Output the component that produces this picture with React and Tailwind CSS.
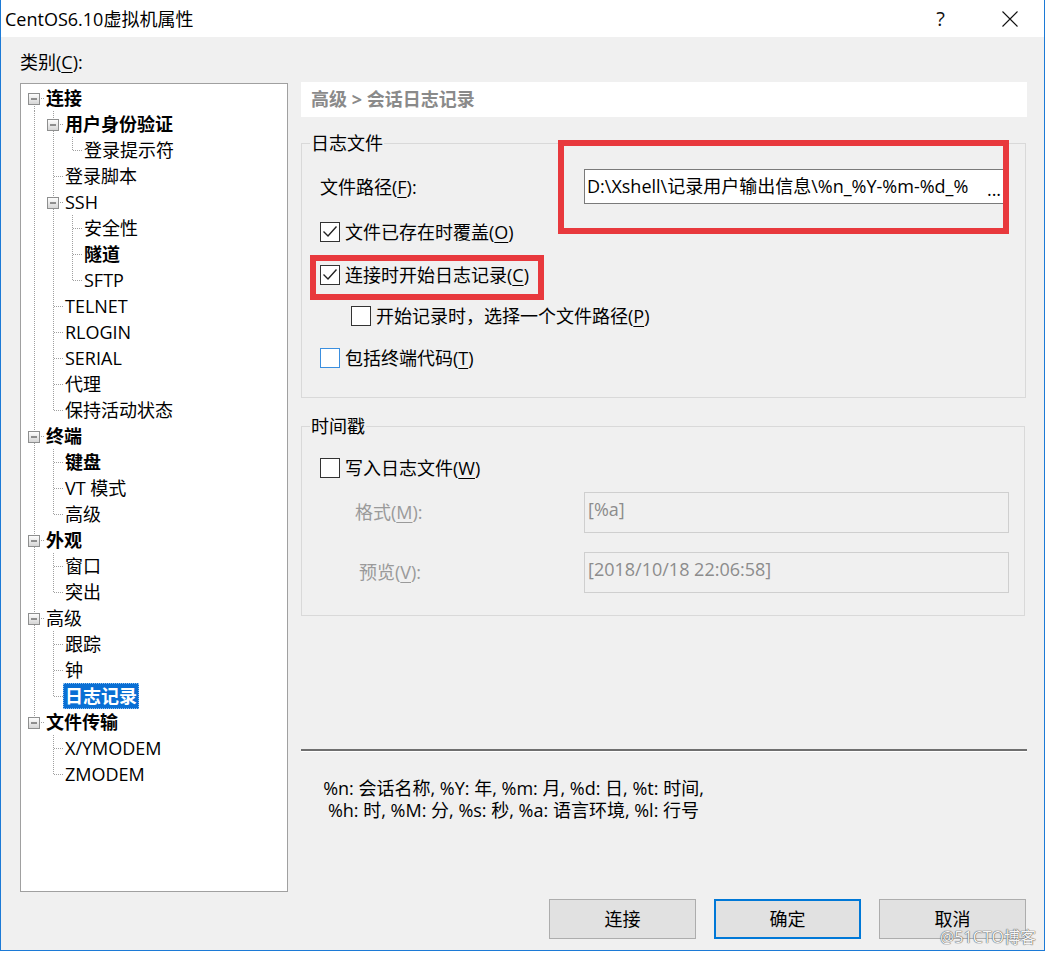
import React from "react";

const FONT = "font-['Open_Sans','Noto_Sans_CJK_SC',sans-serif]";

const tree = [
  {
    label: "连接",
    bold: true,
    children: [
      { label: "用户身份验证", bold: true, children: [{ label: "登录提示符" }] },
      { label: "登录脚本" },
      {
        label: "SSH",
        children: [{ label: "安全性" }, { label: "隧道", bold: true }, { label: "SFTP" }],
      },
      { label: "TELNET" },
      { label: "RLOGIN" },
      { label: "SERIAL" },
      { label: "代理" },
      { label: "保持活动状态" },
    ],
  },
  {
    label: "终端",
    bold: true,
    children: [{ label: "键盘", bold: true }, { label: "VT 模式" }, { label: "高级" }],
  },
  { label: "外观", bold: true, children: [{ label: "窗口" }, { label: "突出" }] },
  {
    label: "高级",
    children: [{ label: "跟踪" }, { label: "钟" }, { label: "日志记录", bold: true, selected: true }],
  },
  { label: "文件传输", bold: true, children: [{ label: "X/YMODEM" }, { label: "ZMODEM" }] },
];

// flatten nested tree into rows with guide-line info
const flatten = (nodes, level = 0, guides = [], out = []) => {
  nodes.forEach((n, i) => {
    const last = i === nodes.length - 1;
    out.push({ ...n, level, guides, last, first: level === 0 && i === 0 });
    if (n.children) flatten(n.children, level + 1, [...guides, !last], out);
  });
  return out;
};

const rows = flatten(tree);

const DOT = { stroke: "#a0a0a0", strokeDasharray: "1 1", strokeWidth: 1 };

const Guide = ({ on }) => (
  <svg width="19" height="26" className="shrink-0">
    {on && <line x1="9.5" y1="0" x2="9.5" y2="26" {...DOT} />}
  </svg>
);

const Connector = ({ first, last, box }) => (
  <svg width="19" height="26" className="shrink-0">
    <defs>
      <linearGradient id="boxfill" x1="0" y1="0" x2="0" y2="1">
        <stop offset="0" stopColor="#ffffff" />
        <stop offset="1" stopColor="#d4d4d4" />
      </linearGradient>
    </defs>
    <line x1="9.5" y1={first ? 13 : 0} x2="9.5" y2={last ? 14 : 26} {...DOT} />
    <line x1="10" y1="13.5" x2="19" y2="13.5" {...DOT} />
    {box && (
      <g>
        <rect x="3.5" y="8.5" width="11" height="11" fill="url(#boxfill)" stroke="#8e8f8f" />
        <line x1="6" y1="14" x2="12" y2="14" stroke="#333" strokeWidth="1" />
      </g>
    )}
  </svg>
);

const Checkbox = ({ checked, hover }) => (
  <span
    className={`flex h-[20px] w-[20px] shrink-0 items-center justify-center border bg-white ${
      hover ? "border-[#3b8fdf]" : "border-[#333333]"
    }`}>
    {checked && (
      <svg width="18" height="18" viewBox="0 0 18 18">
        <path d="M2.5 8.5 L7 13 L15.5 3.5" fill="none" stroke="#222" strokeWidth="1.4" />
      </svg>
    )}
  </span>
);

const Key = ({ children }) => <u className="underline-offset-[3px]">{children}</u>;

export default function App() {
  return (
    <div className={`relative h-[953px] w-[1047px] bg-white text-[18px] text-black ${FONT}`}>
      <div className="flex h-[951px] w-[1045px] flex-col border-x border-b border-[#1c7ad6] bg-[#f0f0f0]">
        {/* Title bar */}
        <div className="flex h-[37px] shrink-0 items-center bg-white pl-[4px]">
          <span className="leading-[24px]">CentOS6.10虚拟机属性</span>
          <div className="ml-auto flex h-full">
            <div className="flex w-[69px] items-center justify-center text-[20px] leading-none text-[#111]">
              ?
            </div>
            <div className="flex w-[69px] items-center justify-center">
              <svg width="16" height="16" viewBox="0 0 16 16">
                <path d="M0.5 0.5 L15.5 15.5 M15.5 0.5 L0.5 15.5" stroke="#111" strokeWidth="1.1" />
              </svg>
            </div>
          </div>
        </div>

        {/* Body */}
        <div className="flex h-[855px] shrink-0 pl-[19px]">
          {/* Category tree */}
          <div className="flex w-[268px] flex-col pt-[13px]">
            <div className="leading-[24px]">
              类别(<Key>C</Key>):
            </div>
            <div className="mt-[9px] h-[810px] border border-[#a0a0a0] bg-white pl-[4px] pt-[1px]">
              {rows.map((r, i) => (
                <div key={i} className="flex h-[26px] items-center">
                  {r.guides.map((g, j) => (
                    <Guide key={j} on={g} />
                  ))}
                  <Connector first={r.first} last={r.last} box={!!r.children} />
                  <span
                    className={`whitespace-nowrap px-[2px] leading-[26px] ${r.bold ? "font-bold" : ""} ${
                      r.selected ? "bg-[#0a6fd4] text-white outline-1 -outline-offset-1 outline-dotted outline-[#8fc0ef]" : ""
                    }`}>
                    {r.label}
                  </span>
                </div>
              ))}
            </div>
          </div>

          {/* Settings panel */}
          <div className="relative ml-[13px] mt-[45px] flex w-[726px] flex-col">
            <div className="flex h-[35px] shrink-0 items-center bg-white pl-[10px] font-bold text-[#8a8a8a]">
              高级 &gt; 会话日志记录
            </div>

            {/* 日志文件 */}
            <fieldset className="mr-[1px] mt-[14px] border border-[#d9d9d9] pb-[26px]">
              <legend className="ml-[8px] px-[1px] leading-[24px]">日志文件</legend>
              <div className="mt-[14px] flex h-[35px] items-center">
                <div className="w-[282px] pl-[18px] leading-[24px]">
                  文件路径(<Key>F</Key>):
                </div>
                <div className="flex h-[35px] w-[421px] border border-[#7a7a7a] bg-white">
                  <span className="flex-1 overflow-hidden whitespace-nowrap pl-[2px] leading-[33px]">
                    D:\Xshell\记录用户输出信息\%n_%Y-%m-%d_%
                  </span>
                  <span className="w-[20px] text-center leading-[38px]">...</span>
                </div>
              </div>
              <div className="mt-[15px] flex h-[26px] items-center gap-[5px] pl-[18px]">
                <Checkbox checked />
                <span>
                  文件已存在时覆盖(<Key>O</Key>)
                </span>
              </div>
              <div className="mt-[17px] flex h-[26px] items-center gap-[5px] pl-[18px]">
                <Checkbox checked />
                <span>
                  连接时开始日志记录(<Key>C</Key>)
                </span>
              </div>
              <div className="mt-[15px] flex h-[26px] items-center gap-[5px] pl-[49px]">
                <Checkbox />
                <span>
                  开始记录时，选择一个文件路径(<Key>P</Key>)
                </span>
              </div>
              <div className="mt-[16px] flex h-[26px] items-center gap-[5px] pl-[18px]">
                <Checkbox hover />
                <span>
                  包括终端代码(<Key>T</Key>)
                </span>
              </div>
            </fieldset>

            {/* 时间戳 */}
            <fieldset className="mr-[2px] mt-[16px] border border-[#d9d9d9] pb-[22px]">
              <legend className="ml-[8px] px-[1px] leading-[24px]">时间戳</legend>
              <div className="mt-[17px] flex h-[26px] items-center gap-[5px] pl-[18px]">
                <Checkbox />
                <span>
                  写入日志文件(<Key>W</Key>)
                </span>
              </div>
              <div className="mt-[11px] flex h-[41px] items-center">
                <div className="w-[282px] pl-[53px] text-[#9a9a9a]">
                  格式(<Key>M</Key>):
                </div>
                <div className="h-[41px] w-[425px] border border-[#cfcfcf] pl-[3px] pt-[4px] leading-[24px] text-[#8c8c8c]">
                  [%a]
                </div>
              </div>
              <div className="mt-[19px] flex h-[41px] items-center">
                <div className="w-[282px] pl-[57px] text-[#9a9a9a]">
                  预览(<Key>V</Key>):
                </div>
                <div className="h-[41px] w-[425px] border border-[#cfcfcf] pl-[3px] pt-[4px] leading-[24px] text-[#8c8c8c]">
                  [2018/10/18 22:06:58]
                </div>
              </div>
            </fieldset>

            <div className="mt-[133px] h-[3px] border-t-2 border-b border-t-[#6f6f6f] border-b-white" />

            <div className="ml-[19px] mt-[25px] w-[387px] text-center text-[18px] leading-[22px]">
              <div className="whitespace-nowrap">%n: 会话名称, %Y: 年, %m: 月, %d: 日, %t: 时间,</div>
              <div className="whitespace-nowrap">%h: 时, %M: 分, %s: 秒, %a: 语言环境, %l: 行号</div>
            </div>

            {/* annotation boxes */}
            <div className="pointer-events-none absolute left-[257px] top-[58px] h-[94px] w-[451px] border-[6px] border-[#e8393d]" />
            <div className="pointer-events-none absolute left-[9px] top-[173px] h-[45px] w-[234px] border-[6px] border-[#e8393d]" />
          </div>
        </div>

        {/* Buttons */}
        <div className="mt-[7px] flex justify-end gap-[18px] pr-[18px]">
          <button className="h-[40px] w-[147px] border border-[#adadad] bg-[#e1e1e1]">连接</button>
          <button className="h-[40px] w-[147px] border-2 border-[#0078d7] bg-[#e1e1e1]">确定</button>
          <button className="h-[40px] w-[147px] border border-[#adadad] bg-[#e1e1e1]">取消</button>
        </div>
      </div>

      <div className="pointer-events-none absolute left-[940px] top-[926px] text-[16px] leading-[22px] text-[#f6f6f6] [text-shadow:0_0_1px_#444,0_0_1px_#444]">
        @51CTO博客
      </div>
    </div>
  );
}
